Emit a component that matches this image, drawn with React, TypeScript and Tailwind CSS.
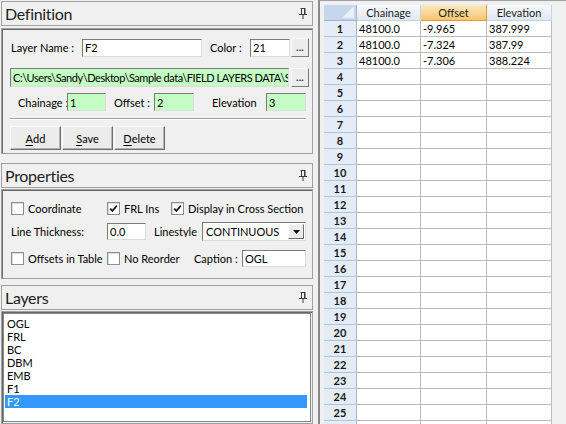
import React from "react";

const rows = [
  { c: "48100.0", o: "-9.965", e: "387.999" },
  { c: "48100.0", o: "-7.324", e: "387.99" },
  { c: "48100.0", o: "-7.306", e: "388.224" },
];

const layers = ["OGL", "FRL", "BC", "DBM", "EMB", "F1", "F2"];

function Pin() {
  return (
    <svg width="8" height="11" viewBox="0 0 8 11" className="shrink-0">
      <rect x="1.5" y="0" width="5" height="1" fill="#3c3c3c" />
      <rect x="2" y="1" width="1" height="5" fill="#3c3c3c" />
      <rect x="5" y="1" width="1.5" height="5" fill="#3c3c3c" />
      <rect x="0" y="6" width="8" height="1" fill="#3c3c3c" />
      <rect x="3.5" y="7" width="1" height="4" fill="#3c3c3c" />
    </svg>
  );
}

function PanelHeader({ title, className = "" }: { title: string; className?: string }) {
  return (
    <div className={`mx-px flex items-center justify-between border border-[#a0a0a0] bg-[#f0f0f0] pl-[3px] pr-[5px] ${className}`}>
      <span className="text-[16px] leading-none tracking-[-0.3px] text-[#1e1e1e]">{title}</span>
      <Pin />
    </div>
  );
}

function TextBox({ value, className = "", green = false }: { value: string; className?: string; green?: boolean }) {
  return (
    <div
      className={`flex items-center overflow-hidden whitespace-nowrap border border-t-[#7a7a7a] border-l-[#7a7a7a] border-r-[#dcdcdc] border-b-[#dcdcdc] pl-[2px] text-[11px] leading-none text-black ${green ? "bg-[#c4fec4]" : "bg-white"} ${className}`}
    >
      {value}
    </div>
  );
}

function DotsButton({ className = "" }: { className?: string }) {
  return (
    <div className={`flex h-[19px] w-[18px] items-end justify-center border border-t-[#f8f8f8] border-l-[#f8f8f8] border-r-[#7a7a7a] border-b-[#7a7a7a] bg-[#ececec] pb-[4px] text-[11px] leading-none ${className}`}>
      ...
    </div>
  );
}

function Check({ checked = false }: { checked?: boolean }) {
  return (
    <span className="flex h-[13px] w-[13px] shrink-0 items-center justify-center border border-[#8e8f8f] bg-white shadow-[inset_1px_1px_0_#dcdcdc]">
      {checked && (
        <svg width="9" height="9" viewBox="0 0 9 9">
          <path d="M1.2 4.6 L3.4 6.9 L7.8 1.6" fill="none" stroke="#1c1c1c" strokeWidth="1.7" />
        </svg>
      )}
    </span>
  );
}

function CheckItem({ label, checked, className }: { label: string; checked?: boolean; className: string }) {
  return (
    <div className={`flex items-center gap-[4px] ${className}`}>
      <Check checked={checked} />
      <span className="whitespace-nowrap text-[11px] leading-none">{label}</span>
    </div>
  );
}

function ActionButton({ first, rest }: { first: string; rest: string }) {
  return (
    <div className="flex h-[24px] w-[51px] items-center justify-center border border-t-[#fafafa] border-l-[#fafafa] border-r-[#6e6e6e] border-b-[#6e6e6e] bg-[#ececec] text-[11px] leading-none shadow-[inset_-1px_-1px_0_#b4b4b4]">
      <span className="underline underline-offset-2">{first}</span>
      {rest}
    </div>
  );
}

function Definition() {
  return (
    <>
      <PanelHeader title="Definition" className="mt-px h-[25px]" />
      <div className="mx-px mt-[2px] flex h-[126px] flex-col border border-[#a0a0a0] pl-[8px] shadow-[inset_1px_1px_0_#696969]">
        <div className="mt-[9px] flex h-[19px] items-center">
          <span className="w-[72px] pl-px text-[11px] leading-none">Layer Name :</span>
          <TextBox value="F2" className="h-[18px] w-[120px]" />
          <span className="ml-[8px] w-[40px] text-[11px] leading-none">Color :</span>
          <TextBox value="21" className="h-[18px] w-[40px]" />
          <DotsButton className="ml-px" />
        </div>
        <div className="mt-[11px] flex h-[19px] items-center">
          <TextBox
            value="C:\Users\Sandy\Desktop\Sample data\FIELD LAYERS DATA\S"
            green
            className="h-[19px] w-[279px] tracking-[-0.45px]"
          />
          <DotsButton className="ml-[2px]" />
        </div>
        <div className="mt-[6px] flex h-[18px] items-center">
          <span className="ml-[8px] w-[49px] whitespace-nowrap text-[11px] leading-none">Chainage :</span>
          <TextBox value="1" green className="h-[18px] w-[39px]" />
          <span className="ml-[8px] w-[40px] text-[11px] leading-none">Offset :</span>
          <TextBox value="2" green className="h-[18px] w-[40px]" />
          <span className="ml-[18px] w-[54px] text-[11px] leading-none">Elevation</span>
          <TextBox value="3" green className="h-[18px] w-[40px]" />
        </div>
        <div className="mt-[7px] h-[2px] w-[296px] border-t border-b border-t-[#a0a0a0] border-b-white" />
        <div className="mt-[6px] flex gap-px">
          <ActionButton first="A" rest="dd" />
          <ActionButton first="S" rest="ave" />
          <ActionButton first="D" rest="elete" />
        </div>
      </div>
    </>
  );
}

function Properties() {
  return (
    <>
      <PanelHeader title="Properties" className="mt-[9px] h-[25px]" />
      <div className="mx-px mt-px flex h-[90px] flex-col border border-[#a0a0a0] pl-[9px] shadow-[inset_1px_1px_0_#696969]">
        <div className="mt-[12px] flex h-[13px] items-center">
          <CheckItem label="Coordinate" className="w-[96px]" />
          <CheckItem label="FRL Ins" checked className="w-[64px]" />
          <CheckItem label="Display in Cross Section" checked className="" />
        </div>
        <div className="mt-[7px] flex h-[19px] items-center">
          <span className="w-[96px] text-[11px] leading-none">Line Thickness:</span>
          <TextBox value="0.0" className="h-[17px] w-[39px]" />
          <span className="ml-[8px] w-[48px] overflow-hidden whitespace-nowrap text-[11px] leading-none">Linestyle</span>
          <div className="flex h-[19px] w-[104px] items-center border border-t-[#7a7a7a] border-l-[#7a7a7a] border-r-[#dcdcdc] border-b-[#dcdcdc] bg-white pl-[3px] pr-px">
            <span className="flex-1 text-[11px] leading-none">CONTINUOUS</span>
            <div className="flex h-[15px] w-[16px] items-center justify-center border border-t-[#fafafa] border-l-[#fafafa] border-r-[#6e6e6e] border-b-[#6e6e6e] bg-[#ececec]">
              <svg width="7" height="4" viewBox="0 0 7 4">
                <path d="M0 0 H7 L3.5 4 Z" fill="#111" />
              </svg>
            </div>
          </div>
        </div>
        <div className="mt-[9px] flex h-[17px] items-center">
          <CheckItem label="Offsets in Table" className="w-[96px]" />
          <CheckItem label="No Reorder" className="w-[87px]" />
          <span className="w-[48px] text-[11px] leading-none">Caption :</span>
          <TextBox value="OGL" className="h-[17px] w-[64px]" />
        </div>
      </div>
    </>
  );
}

function Layers() {
  return (
    <>
      <PanelHeader title="Layers" className="mt-[6px] h-[25px]" />
      <div className="mx-px mt-px flex flex-1 flex-col border border-[#a0a0a0] p-[1px] shadow-[inset_1px_1px_0_#696969]">
        <div className="flex-1 border border-[#828790] bg-white pl-px pr-[3px] pt-[3px]">
          {layers.map((l) => (
            <div
              key={l}
              className={`h-[13px] pl-[2px] text-[11px] leading-[13px] ${l === "F2" ? "bg-[#3399ff] text-white" : "text-black"}`}
            >
              {l}
            </div>
          ))}
        </div>
      </div>
    </>
  );
}

function Grid() {
  const count = 26;
  const head = "flex h-[16px] items-center justify-center border-r border-b text-[11px] leading-none text-[#1e1e1e]";
  const cell = "h-[16px] border-r border-b border-[#bcbcbc] bg-white pl-[2px] text-[11px] leading-[15px] text-black";
  return (
    <div className="ml-[3px] flex-1 border-l-2 border-t border-l-[#8a8a8a] border-t-[#a0a0a0] bg-[#f0f0f0] pl-[4px] pt-[4px]">
      <div className="grid grid-cols-[33px_64px_66px_65px]">
        <div className="relative h-[16px] border-r border-b border-[#9eb6ce] bg-[#c6d7ed]">
          <svg width="12" height="12" viewBox="0 0 12 12" className="absolute bottom-[2px] right-[2px]">
            <path d="M12 0 V12 H0 Z" fill="#e9eff8" />
          </svg>
        </div>
        <div className={`${head} border-[#c5d2e2] bg-gradient-to-b from-[#f9fbfd] to-[#dfe7f1]`}>Chainage</div>
        <div className={`${head} border-[#f29536] bg-gradient-to-b from-[#fbe7bf] to-[#f6c66c]`}>Offset</div>
        <div className={`${head} border-[#c5d2e2] bg-gradient-to-b from-[#f9fbfd] to-[#dfe7f1]`}>Elevation</div>
        {Array.from({ length: count }, (_, i) => {
          const r = rows[i];
          return (
            <React.Fragment key={i}>
              <div className="flex h-[16px] items-end justify-center border-r border-b border-r-[#9eb6ce] border-b-[#b3c3d8] bg-[#e4ecf7] pb-[2px] text-[11px] font-bold leading-none text-[#1a1a1a]">
                {i + 1}
              </div>
              <div className={cell}>{r?.c}</div>
              <div className={cell}>{r?.o}</div>
              <div className={cell}>{r?.e}</div>
            </React.Fragment>
          );
        })}
      </div>
    </div>
  );
}

export default function App() {
  return (
    <div className="flex h-[424px] w-[566px] overflow-hidden bg-[#f0f0f0] font-['Lato',sans-serif] text-black">
      <div className="flex w-[314px] flex-col">
        <Definition />
        <Properties />
        <Layers />
      </div>
      <div className="w-px" />
      <Grid />
    </div>
  );
}
